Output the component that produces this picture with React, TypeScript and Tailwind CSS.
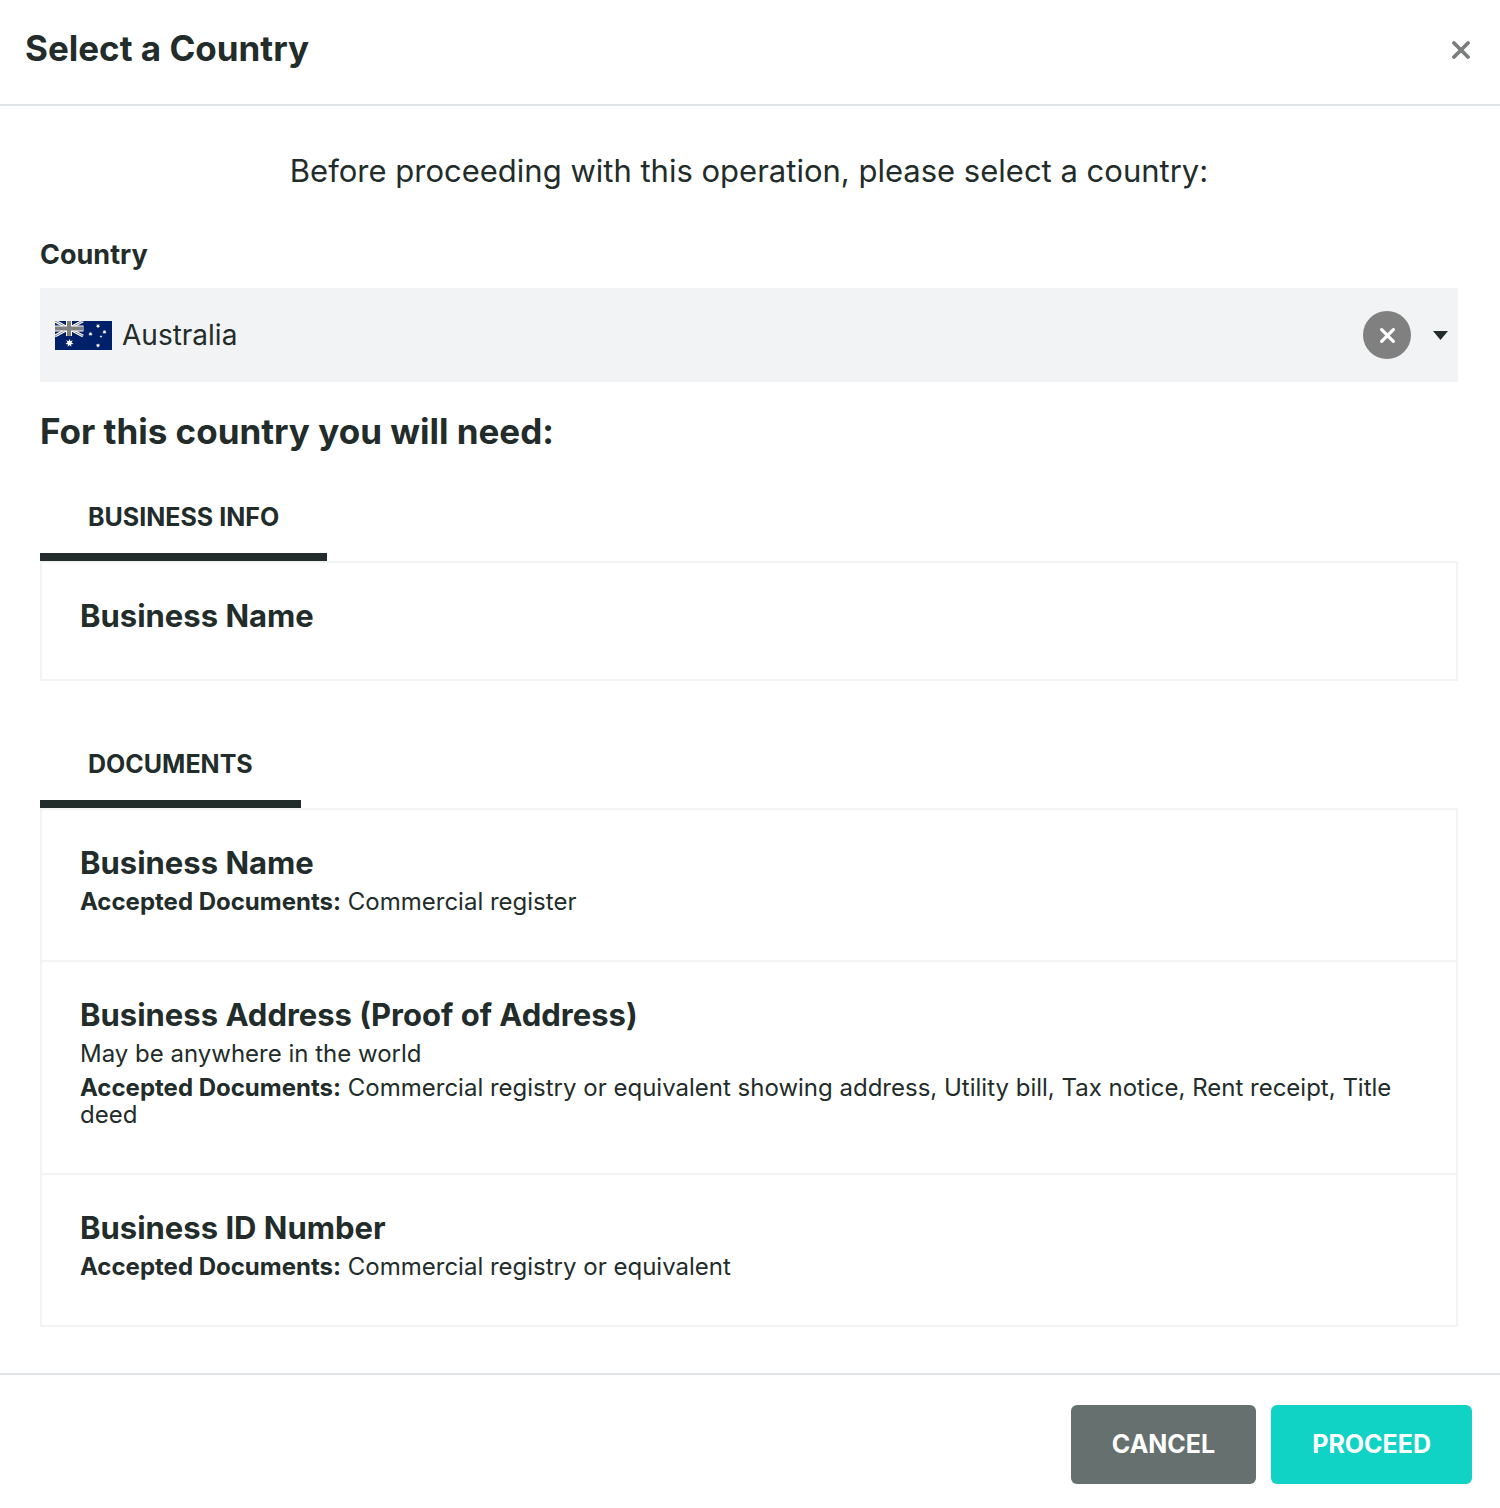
import React, { useState } from "react";

interface Requirement {
  title: string;
  note?: string;
  accepted?: string;
}

interface Section {
  label: string;
  items: Requirement[];
}

const sections: Section[] = [
  {
    label: "Business Info",
    items: [{ title: "Business Name" }],
  },
  {
    label: "Documents",
    items: [
      { title: "Business Name", accepted: "Commercial register" },
      {
        title: "Business Address (Proof of Address)",
        note: "May be anywhere in the world",
        accepted:
          "Commercial registry or equivalent showing address, Utility bill, Tax notice, Rent receipt, Title deed",
      },
      {
        title: "Business ID Number",
        accepted: "Commercial registry or equivalent",
      },
    ],
  },
];

const CrossIcon = ({ className }: { className: string }) => (
  <svg
    className={className}
    viewBox="0 0 18 18"
    fill="none"
    stroke="currentColor"
    strokeWidth={3.8}
    strokeLinecap="round"
    aria-hidden="true"
  >
    <path d="M2 2l14 14M16 2L2 16" />
  </svg>
);

const STAR =
  "M0-5L1-2.1 3.9-3.1 2.3-.5 4.9 1.1 1.8 1.4 2.2 4.5 0 2.3-2.2 4.5-1.8 1.4-4.9 1.1-2.3-.5-3.9-3.1-1-2.1z";

const AustraliaFlag = () => (
  <svg className="h-[29px] w-[57px] shrink-0" viewBox="0 0 57 29" aria-hidden="true">
    <path fill="#00206a" d="M0 0h57v29H0z" />
    <path stroke="#fff" strokeWidth={3} d="M0 0l28 15M28 0L0 15" />
    <path stroke="#808080" strokeWidth={1} d="M0 0l28 15M28 0L0 15" />
    <path stroke="#fff" strokeWidth={6} d="M14 0v15M0 7.5h28.5" />
    <path stroke="#808080" strokeWidth={4} d="M14 0v15M0 7.5h28.5" />
    <g fill="#fff">
      <path d={STAR} transform="translate(14.5 22) scale(.85)" />
      <path d={STAR} transform="translate(43 5) scale(.45)" />
      <path d={STAR} transform="translate(35.5 13) scale(.45)" />
      <path d={STAR} transform="translate(49.5 11) scale(.45)" />
      <path d={STAR} transform="translate(46 15.5) scale(.28)" />
      <path d={STAR} transform="translate(43 24.5) scale(.45)" />
    </g>
  </svg>
);

const RequirementRow = ({ item }: { item: Requirement }) => (
  <li className="px-[38px] pt-[37px] pb-[45px] text-2xl leading-[27px]">
    <h4 className="pb-0.5 text-[31px] leading-8 font-bold">{item.title}</h4>
    {item.note && <p className="mt-[7px]">{item.note}</p>}
    {item.accepted && (
      <p className="mt-[7px]">
        <strong className="font-bold">Accepted Documents:</strong> {item.accepted}
      </p>
    )}
  </li>
);

const App: React.FC = () => {
  const [country, setCountry] = useState("au");

  return (
    <div
      role="dialog"
      aria-labelledby="dialog-title"
      className="bg-white font-['Inter',sans-serif] text-[#222c2a]"
    >
      <header className="flex items-center justify-between border-b-2 border-[#dfe3e6] pt-6 pr-[30px] pb-8 pl-[25px]">
        <h1 id="dialog-title" className="text-[35px] leading-12 font-bold">
          Select a Country
        </h1>
        <button type="button" aria-label="Close" className="pt-1 text-[#7b7d7d]">
          <CrossIcon className="size-[18px]" />
        </button>
      </header>

      <main className="pt-[45px] pr-[42px] pb-[46px] pl-10">
        <p className="text-center text-[31px] leading-10">
          Before proceeding with this operation, please select a country:
        </p>

        <label htmlFor="country" className="mt-11 block text-[27px] leading-10 font-bold">
          Country
        </label>
        <div className="mt-[13px] flex h-[94px] items-center bg-[#f2f3f5] pr-[10px] pl-[15px]">
          {country && <AustraliaFlag />}
          <select
            id="country"
            value={country}
            onChange={(e) => setCountry(e.target.value)}
            className="h-full min-w-0 flex-1 appearance-none bg-transparent pl-[10px] text-[28px] outline-none"
          >
            <option value=""></option>
            <option value="au">Australia</option>
          </select>
          <button
            type="button"
            aria-label="Clear country"
            onClick={() => setCountry("")}
            className="mr-[22px] flex size-12 items-center justify-center rounded-full bg-[#808080] text-white"
          >
            <CrossIcon className="size-[15px]" />
          </button>
          <svg className="h-[9px] w-[15px]" viewBox="0 0 15 9" fill="currentColor" aria-hidden="true">
            <path d="M0 0h15L7.500 9z" />
          </svg>
        </div>

        <h2 className="mt-[29px] text-[35px] leading-10 font-bold">
          For this country you will need:
        </h2>

        <div className="mt-[27px] flex flex-col gap-11">
          {sections.map((section) => (
            <section key={section.label}>
              <h3 className="w-fit border-b-8 border-[#222c2a] px-12 pt-[23px] pb-5 text-[25px] leading-8 font-bold uppercase">
                {section.label}
              </h3>
              <ul className="divide-y-2 divide-[#f2f3f3] border-2 border-[#f2f3f3]">
                {section.items.map((item) => (
                  <RequirementRow key={item.title} item={item} />
                ))}
              </ul>
            </section>
          ))}
        </div>
      </main>

      <footer className="flex justify-end gap-[15px] border-t-2 border-[#dfe3e6] px-7 pt-[30px] pb-6">
        <button
          type="button"
          className="rounded-md bg-[#66706e] px-[41px] py-6 text-[25px] leading-[31px] font-bold text-white"
        >
          CANCEL
        </button>
        <button
          type="button"
          className="rounded-md bg-[#10d3c5] px-[41px] py-6 text-[25px] leading-[31px] font-bold text-white"
        >
          PROCEED
        </button>
      </footer>
    </div>
  );
};

export default App;
